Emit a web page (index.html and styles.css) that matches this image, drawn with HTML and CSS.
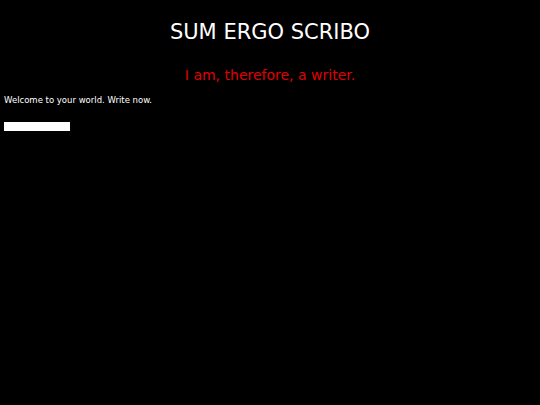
FILE: index.html
```html
<!DOCTYPE html>
<html>
<head>
<meta charset="utf-8">
<link rel="stylesheet" href="styles.css">
</head>
<body>
<header class="masthead">
  <h1 class="title">SUM ERGO SCRIBO</h1>
  <h2 class="tagline">I am, therefore, a writer.</h2>
</header>
<main class="content">
  <p class="welcome">Welcome to your world. Write now.</p>
  <input class="entry" type="text">
</main>
</body>
</html>
```

FILE: styles.css
```css
html, body {
  margin: 0;
  padding: 0;
  background: #000;
  height: 100%;
}
body {
  font-family: "DejaVu Sans", Verdana, sans-serif;
  color: #fff;
  padding: 0 4px;
}
.masthead {
  text-align: center;
  padding-top: 20px;
}
.title {
  margin: 0;
  font-size: 21px;
  font-weight: normal;
  line-height: 24px;
  color: #fff;
}
.tagline {
  margin: 22px 0 0;
  font-size: 14px;
  font-weight: normal;
  line-height: 18px;
  color: #e00000;
}
.content {
  margin-top: 10px;
}
.welcome {
  margin: 0;
  font-size: 8.5px;
  line-height: 12px;
}
.entry {
  display: block;
  margin-top: 16px;
  width: 66px;
  height: 9px;
  padding: 0;
  border: 0;
  background: #fff;
  outline: none;
}
```
